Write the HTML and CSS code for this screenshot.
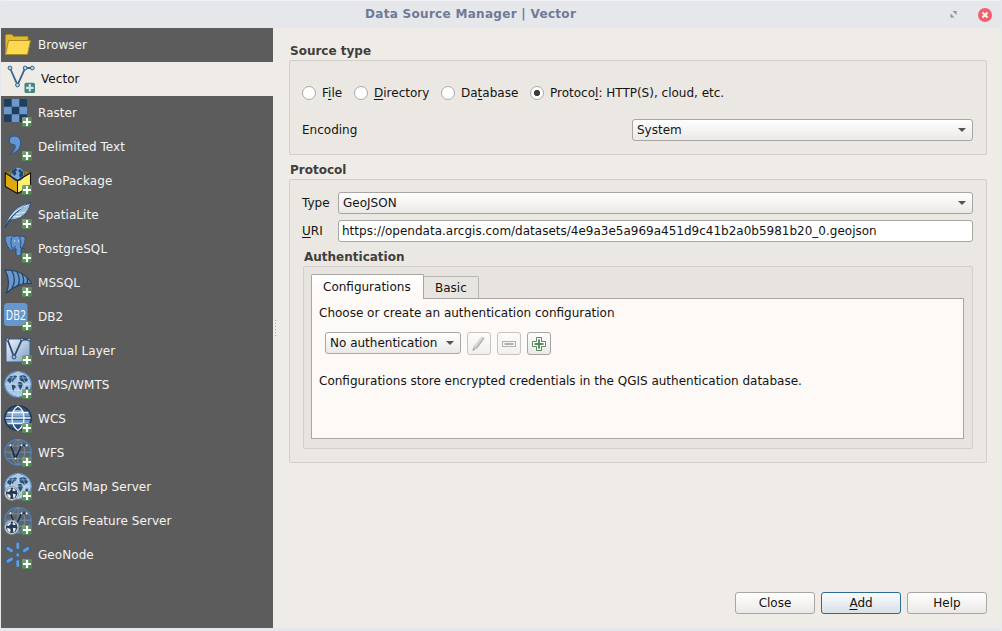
FILE: index.html
```html
<!DOCTYPE html>
<html lang="en">
<head>
<meta charset="utf-8">
<title>Data Source Manager | Vector</title>
<link rel="stylesheet" href="styles.css">
</head>
<body>
<svg class="defs" aria-hidden="true">
  <defs>
    <linearGradient id="gBlue" x1="0" y1="0" x2="1" y2="1"><stop offset="0" stop-color="#eef4fa"/><stop offset="1" stop-color="#7d9dc6"/></linearGradient>
    <linearGradient id="gBadge" x1="0" y1="0" x2="1" y2="1"><stop offset="0" stop-color="#7cae79"/><stop offset="0.5" stop-color="#5a8c5a"/><stop offset="1" stop-color="#4a804c"/></linearGradient>
    <symbol id="badge" viewBox="0 0 10 10">
      <rect width="10" height="10" rx="1.4" fill="url(#gBadge)"/>
      <path d="M5 1v8M1 5h8" stroke="#fff" stroke-width="2.200"/>
    </symbol>
    <symbol id="wire" viewBox="0 0 28 26.500" preserveAspectRatio="none">
      <ellipse cx="14" cy="12.500" rx="13.200" ry="12" fill="#5f6468" stroke="#4a7dba" stroke-width="1.500"/>
      <path d="M14 .5v24M14 .5C5 6 5 19 14 24.500M14 .5c9 5.500 9 18.500 0 24M1 12.500h26M3.500 6.500h21M3.500 18.500h21" fill="none" stroke="#7390b0" stroke-width=".9"/>
      <path d="M6.500 6l5 12.500 6-12.500h5" fill="none" stroke="#182f4c" stroke-width="1.600"/>
      <g fill="#e8edf3"><circle cx="6.500" cy="6" r="1.100"/><circle cx="11.500" cy="18.500" r="1.100"/><circle cx="17.500" cy="6" r="1.100"/><circle cx="22.500" cy="6" r="1.100"/></g>
    </symbol>
    <symbol id="map" viewBox="0 0 28 26.500" preserveAspectRatio="none">
      <ellipse cx="14" cy="12.500" rx="13.200" ry="12" fill="#a6c5e6" stroke="#608fc5" stroke-width="1.300"/>
      <path d="M4 7l2-2 3 0 1-1 3 1-1 2-2 1-1 2-2 .5-1 1.500-1-1.500-2-1zM7.500 12.500l3 1 1.500 1.500-2 2-.5 3-1.500-3zM15 6l2-2 3 0 2 1 2 3-1 2-1.500 0-1 2-1.500-2-2-.5-1-1zM14 10.500l3 0 2 2-1 2.500-1.500 3-1.500-2.500-1.500-2zM21.500 15l3 0-1 2.500-2 0z" fill="#294b70"/>
      <path d="M14 .5v24M14 .5C5 6 5 19 14 24.500M14 .5c9 5.500 9 18.500 0 24M1 12.500h26M3.500 6.500h21M3.500 18.500h21" fill="none" stroke="#dcebf7" stroke-opacity=".55" stroke-width=".8"/>
    </symbol>
    <symbol id="arc" viewBox="0 0 15 15">
      <circle cx="7.500" cy="7.500" r="6.800" fill="#dde0e3" stroke="#919da9"/>
      <circle cx="7.500" cy="7.500" r="5.500" fill="#213a58"/>
      <path d="M3 4.500l3-2 1 1-1.500 2-2 1zM9 2.500l2.500 2-1.500 1-2-1zM3 8l3 1 .5 2-1 1.500-2-1.500zM8.500 8l3 .5-1 3-1.500 .5z" fill="#e9ecef"/>
    </symbol>
  </defs>
</svg>

<div class="window">
  <header class="titlebar">
    <h1 class="title">Data Source Manager | Vector</h1>
    <svg class="restore" viewBox="0 0 7 7"><path d="M2.500 0h4v4zM.5 2.500l4 4h-4z" fill="#8b91a4"/></svg>
    <svg class="close" viewBox="0 0 14 14"><circle cx="7" cy="7" r="7" fill="#f4606a"/><path d="M4.500 4.500l5 5M9.500 4.500l-5 5" stroke="#fff" stroke-width="2"/></svg>
  </header>

  <div class="body">
    <nav class="sidebar">
      <div class="item"><svg class="icon" viewBox="0 0 28 28"><path d="M1.500 22V4.500l1-1h5.500l1.500 2h14.500v3.500" fill="#e3b92e" stroke="#a98e28" stroke-width="1"/><path d="M4.500 9.500h22L23.500 23.500H1.500z" fill="#fcd94f" stroke="#a98e28" stroke-width="1"/></svg><span>Browser</span></div>
      <div class="item selected"><svg class="icon" viewBox="0 0 28 28"><path d="M3 3l7.500 17L18.200 3H25" fill="none" stroke="#36648d" stroke-width="1.800"/><g fill="#b5d0df" stroke="#36648d" stroke-width="1"><circle cx="3" cy="3" r="1.900"/><circle cx="10.500" cy="20" r="1.900"/><circle cx="18.200" cy="3" r="1.900"/><circle cx="25.300" cy="3" r="1.900"/></g><rect x="17.500" y="17.700" width="10.500" height="10.300" rx="1.500" fill="#43877f"/><path d="M22.800 19v7.600M19 22.800h7.600" stroke="#c8e5ea" stroke-width="2.200"/></svg><span>Vector</span></div>
      <div class="item"><svg class="icon" viewBox="0 0 28 28"><rect width="23" height="23" fill="#6c98ca"/><path d="M0 0h7.700v7.700H0zM15.300 0H23v7.700h-7.700zM7.700 7.700h7.600v7.600H7.700zM0 15.300h7.700V23H0zM15.300 15.300H23V23h-7.700z" fill="#213e60"/><use href="#badge" x="18" y="18" width="10" height="10"/></svg><span>Raster</span></div>
      <div class="item"><svg class="icon" viewBox="0 0 28 28"><path d="M10.500 2.800c-7 0-7 8.500-1 8.900 3 .3 2 5-3 9.300C19 19 20 3 10.500 2.800z" fill="#6696cf" stroke="#2f5a8c" stroke-width="1.300"/><use href="#badge" x="18" y="18" width="10" height="10"/></svg><span>Delimited Text</span></div>
      <div class="item"><svg class="icon" viewBox="0 0 28 28"><path d="M1.300 6L13.500 13v13.500L1.300 19.500z" fill="#e0aa0e"/><path d="M13.500 13l13-7v13.500l-13 7z" fill="#fff16f"/><path d="M1.300 6L13.500 1l13 5-13 7z" fill="#9a780e"/><circle cx="13.500" cy="7" r="6.800" fill="#7ba6d4" stroke="#35557a" stroke-width=".8"/><path d="M8.500 3l3-2 2 2-2 1.500 1 2-2 2.500-2-2.500-1-1zM16 2l3 3v4l-3 2-1-3 1-2-2-2z" fill="#21476f"/><path d="M1.300 6L13.500 13.500 26.500 6v13.500l-13 7-12.200-7zM13.500 13.500v13" fill="none" stroke="#17130a" stroke-width="1.100"/><use href="#badge" x="18" y="18" width="10" height="10"/></svg><span>GeoPackage</span></div>
      <div class="item"><svg class="icon" viewBox="0 0 28 28"><path d="M1 27C2 21 4 17 8 12S17 4 26.500 1c-1 8-5 13-11 16-3 1.500-7 2-10 2z" fill="#9fbfdc" stroke="#315478" stroke-width="1"/><path d="M1 27C5 18 13 9 26 1.500" fill="none" stroke="#294b6f" stroke-width="1.200"/><path d="M5 18c5-7 11-11 19-14M9 16l8-1M12 13l9-2" fill="none" stroke="#dcebf5" stroke-width="1"/><use href="#badge" x="18" y="18" width="10" height="10"/></svg><span>SpatiaLite</span></div>
      <div class="item"><svg class="icon" viewBox="0 0 28 28"><path d="M5 1c2-1 4 0 5 .5C13 .5 15 1 16 1.500c5-1.500 6 2 4.500 6-1 3-2 6-3.500 6v5c0 3-5 3-5 0v-5l-2 1-2 1C4 15 0 4 1.500 2.500 2 1 4 .5 5 1z" fill="#6595cc" stroke="#294f7d" stroke-width="1"/><path d="M8 2c-2 4-1 8 0 11M15.500 2c2 3 1 7 1 11M7 13c2 1 4 0 4.500-2M17 13l4 1" fill="none" stroke="#294f7d" stroke-width="1"/><circle cx="10.500" cy="6" r=".7" fill="#d8e5f3"/><circle cx="14.500" cy="6" r=".7" fill="#d8e5f3"/><use href="#badge" x="18" y="18" width="10" height="10"/></svg><span>PostgreSQL</span></div>
      <div class="item"><svg class="icon" viewBox="0 0 28 28"><path d="M1 1c11 0 21 3 26.500 13.500-10-1-18 3-25.500 10C6 16 5 8 1 1z" fill="#6b99cd" stroke="#234264" stroke-width="1.200"/><path d="M8 2c3 6 3 12 0 17M13 3c3 5 3 9 1 14M18 5c2 4 2 7 1 10M23 9c1 2 1 3 0 5" fill="none" stroke="#234264" stroke-width="1.300"/><use href="#badge" x="18" y="18" width="10" height="10"/></svg><span>MSSQL</span></div>
      <div class="item"><svg class="icon" viewBox="0 0 28 28"><rect width="23.500" height="23" rx="3.500" fill="#6697cd"/><text class="db2" x="1.800" y="17" textLength="20" lengthAdjust="spacingAndGlyphs">DB2</text><use href="#badge" x="18" y="18" width="10" height="10"/></svg><span>DB2</span></div>
      <div class="item"><svg class="icon" viewBox="0 0 28 28"><path d="M2 2h24v23H2z" fill="url(#gBlue)" stroke="#3a5d86" stroke-width="1"/><path d="M3.500 2.500L10 20 18 2.500h7" fill="none" stroke="#2b4b6d" stroke-width="1.800"/><g fill="#9ab9d8" stroke="#2b4b6d"><circle cx="3.500" cy="2.500" r="1.500"/><circle cx="10" cy="20" r="2"/><circle cx="18" cy="2.500" r="1.500"/><circle cx="25" cy="2.500" r="1.500"/></g><use href="#badge" x="18" y="18" width="10" height="10"/></svg><span>Virtual Layer</span></div>
      <div class="item"><svg class="icon" viewBox="0 0 28 28"><use href="#map" width="28" height="28"/><use href="#badge" x="18" y="18" width="10" height="10"/></svg><span>WMS/WMTS</span></div>
      <div class="item"><svg class="icon" viewBox="0 0 28 28"><ellipse cx="14" cy="13" rx="13.200" ry="12.300" fill="#2b507b" stroke="#1d3450" stroke-width="1.300"/><path d="M3 8h22l1 3.500H2zM2 15h24l-1 3.500H3z" fill="#6d9bcb"/><path d="M9 5h10l1 3v3.500H8V8z" fill="#86aed8"/><path d="M14 1C6 6 6 20 14 25.500M14 1c8 5 8 19 0 24.500M1.500 13h25M3.500 7.500h21M3.500 18.500h21" fill="none" stroke="#f2f6fa" stroke-width="1.300"/><use href="#badge" x="18" y="18" width="10" height="10"/></svg><span>WCS</span></div>
      <div class="item"><svg class="icon" viewBox="0 0 28 28"><use href="#wire" width="28" height="28"/><use href="#badge" x="18" y="18" width="10" height="10"/></svg><span>WFS</span></div>
      <div class="item"><svg class="icon" viewBox="0 0 28 28"><use href="#map" width="28" height="28"/><use href="#arc" x="0" y="12.500" width="15.500" height="15.500"/><use href="#badge" x="18" y="18" width="10" height="10"/></svg><span>ArcGIS Map Server</span></div>
      <div class="item"><svg class="icon" viewBox="0 0 28 28"><use href="#wire" width="28" height="28"/><use href="#arc" x="0" y="12.500" width="15.500" height="15.500"/><use href="#badge" x="18" y="18" width="10" height="10"/></svg><span>ArcGIS Feature Server</span></div>
      <div class="item"><svg class="icon" viewBox="0 0 28 28"><path d="M13.800 3v3.500M13.800 20.500v4M4 7.500l3.500 2.200M23.800 7.500l-3.500 2.200M4 20.200l3.500-2.200M13.800 13.800v.1" stroke="#2f629b" stroke-width="4.600" stroke-linecap="round"/><path d="M13.800 3v3.500M13.800 20.500v4M4 7.500l3.500 2.200M23.800 7.500l-3.500 2.200M4 20.200l3.500-2.200M13.800 13.800v.1" stroke="#659bd5" stroke-width="3" stroke-linecap="round"/><use href="#badge" x="18" y="18" width="10" height="10"/></svg><span>GeoNode</span></div>
    </nav>
    <div class="splitter"><i></i><i></i><i></i><i></i><i></i><i></i></div>

    <main class="content">
      <h2 class="heading">Source type</h2>
      <section class="group source">
        <div class="radios">
          <label class="radio file"><i class="dot"></i><span>F<u>i</u>le</span></label>
          <label class="radio directory"><i class="dot"></i><span><u>D</u>irectory</span></label>
          <label class="radio database"><i class="dot"></i><span>Da<u>t</u>abase</span></label>
          <label class="radio"><i class="dot on"></i><span>Protoco<u>l</u>: HTTP(S), cloud, etc.</span></label>
        </div>
        <div class="encoding"><span>Encoding</span><div class="combo system"><span>System</span><i class="arrow"></i></div></div>
      </section>

      <h2 class="heading next">Protocol</h2>
      <section class="group protocol">
        <div class="field"><span class="label">Type</span><div class="combo"><span>GeoJSON</span><i class="arrow"></i></div></div>
        <div class="field"><span class="label"><u>U</u>RI</span><div class="input">https://opendata.arcgis.com/datasets/4e9a3e5a969a451d9c41b2a0b5981b20_0.geojson</div></div>
        <h3 class="heading auth-heading">Authentication</h3>
        <section class="group auth">
          <div class="tabs"><div class="tab active">Configurations</div><div class="tab">Basic</div></div>
          <div class="page">
            <p class="note">Choose or create an authentication configuration</p>
            <div class="tools">
              <div class="combo noauth"><span>No authentication</span><i class="arrow"></i></div>
              <button class="tool disabled"><svg viewBox="0 0 16 16"><path d="M1.500 15l1-4.500L10.500.8l3 1.200-7.300 10.500z" fill="#c3c1bf"/><path d="M3.500 11L11 1.500" stroke="#e1dfdd" stroke-width="1.300"/><path d="M5.500 12.500L13 2.500" stroke="#b2b0ae"/><path d="M1.500 15l.7-2.500 1.500.8z" fill="#92908e"/></svg></button>
              <button class="tool disabled"><svg viewBox="0 0 16 16"><rect x="1.500" y="5.500" width="13" height="5" fill="#f7f6f5" stroke="#b1afae"/><path d="M3.500 8h9" stroke="#b1afae" stroke-width="2"/></svg></button>
              <button class="tool"><svg viewBox="0 0 16 16"><path d="M5.500 1.500h5v4h4v5h-4v4h-5v-4h-4v-5h4z" fill="#fff" stroke="#548b57"/><path d="M8 3.500v9M3.500 8h9" stroke="#548b57" stroke-width="2"/></svg></button>
            </div>
            <p class="note">Configurations store encrypted credentials in the QGIS authentication database.</p>
          </div>
        </section>
      </section>
      <footer class="buttons"><button class="button">Close</button><button class="button default"><span><u>A</u>dd</span></button><button class="button">Help</button></footer>
    </main>
  </div>
</div>
</body>
</html>
```

FILE: styles.css
```css
* { box-sizing: border-box; }
body { margin: 0; font: 12px/16px "DejaVu Sans", sans-serif; color: #141312; }
h1, h2, h3, p { margin: 0; font-size: 12px; }
.note { font-weight: normal; }
.defs { display: block; width: 0; height: 0; }
u { text-decoration-thickness: 1px; text-underline-offset: 2px; text-decoration-skip-ink: none; }

.window { display: flex; flex-direction: column; width: 1002px; height: 631px; padding: 0 1px 3px; background: #e4e7ec; overflow: hidden; }
.titlebar { display: flex; align-items: center; flex: 0 0 28px; padding: 0 9px 0 364px; border-top: 1px solid #f0f1f4; background: #e5e7eb; }
.title { flex: 1; color: #6f7a96; line-height: 27px; letter-spacing: .3px; }
.restore { width: 7px; height: 7px; margin-right: 21px; }
.close { width: 14px; height: 14px; }
.body { display: flex; flex: 1; min-height: 0; background: #efebe6; }

.sidebar { flex: 0 0 272px; background: #5c5c5c; color: #f5f4f3; }
.item { display: flex; align-items: center; height: 34px; gap: 6px; padding-left: 3px; letter-spacing: .06px; }
.item.selected { background: #efebe6; color: #141312; padding-left: 6px; }
.icon { flex: none; width: 28px; height: 28px; }
.db2 { font: 15px "Open Sans", sans-serif; fill: #fff; }

.splitter { display: flex; flex-direction: column; align-items: center; justify-content: center; gap: 2px; width: 4px; }
.splitter i { width: 1px; height: 1px; background: #b3afac; }
.content { display: flex; flex-direction: column; flex: 1; padding: 12px 14px 14px 12px; }
.heading { height: 20px; line-height: 22px; padding-left: 1px; color: #3f3e3c; font-weight: bold; }
.heading.next { margin-top: 4px; }
.group { border: 1px solid #d2cecb; border-radius: 2px; background: #ebe8e3; }
.source { height: 95px; padding: 24px 13px 0 12px; }
.radios { display: flex; height: 16px; }
.radio { display: flex; align-items: center; gap: 6px; }
.file { width: 52px; }
.directory { width: 87px; }
.database { width: 89px; }
.dot { width: 14px; height: 14px; border: 1px solid #aba9a7; border-radius: 50%; background: #fff; }
.dot.on { background: radial-gradient(circle, #3d3d3d 2.800px, #fff 3.500px); }
.encoding { display: flex; align-items: center; justify-content: space-between; margin-top: 18px; }

.combo, .input { display: flex; align-items: center; flex: 1; height: 22px; border: 1px solid #a8a5a3; border-radius: 3px; }
.combo { justify-content: space-between; padding: 0 6px 0 4px; background: linear-gradient(#fefefe, #ebe9e6); }
.combo.system { flex: 0 0 341px; }
.input { padding: 0 3px; background: #fff; }
.arrow { border: 4px solid transparent; border-top: 4px solid #555250; border-bottom: 0; }

.protocol { height: 284px; padding: 12px 13px 0 12px; }
.field { display: flex; align-items: center; height: 22px; margin-bottom: 6px; }
.label { width: 36px; }
.auth-heading { margin-top: -2px; padding-left: 2px; }
.auth { height: 183px; margin-left: 1px; padding: 7px 8px 0 7px; background: #e7e4df; }
.tabs { display: flex; align-items: flex-end; height: 24px; }
.tab { height: 22px; padding: 3px 11px 0; border: 1px solid #b9b5b2; border-bottom: 0; border-left: 0; border-radius: 0 2px 0 0; background: #e8e5e0; }
.tab.active { z-index: 1; height: 25px; width: 113px; padding-top: 4px; margin-bottom: -1px; border: 1px solid #a8a5a3; border-bottom: 0; border-radius: 2px 2px 0 0; background: linear-gradient(#fff, #fdf9f6); }
.page { height: 141px; padding: 6px 7px; border: 1px solid #a8a5a3; background: #fdf9f6; }
.tools { display: flex; gap: 6px; margin: 11px 0 18px 6px; }
.combo.noauth { flex: 0 0 136px; }
.tool { display: grid; place-items: center; width: 24px; height: 23px; padding: 0; border: 1px solid #a8a5a3; border-radius: 3px; background: linear-gradient(#fefefe, #ebe9e6); }
.tool.disabled { border-color: #c6c3c1; background: linear-gradient(#fdfcfb, #f2efec); }
.tool svg { width: 16px; height: 16px; }

.buttons { display: flex; justify-content: flex-end; gap: 6px; margin-top: auto; }
.button { width: 80px; height: 22px; padding: 0; border: 1px solid #a8a5a3; border-radius: 3px; background: linear-gradient(#fefefe, #ebe9e6); font: inherit; color: inherit; }
.button.default { border-color: #286b94; background: linear-gradient(#fafbfc, #d8e1e5); }
```
